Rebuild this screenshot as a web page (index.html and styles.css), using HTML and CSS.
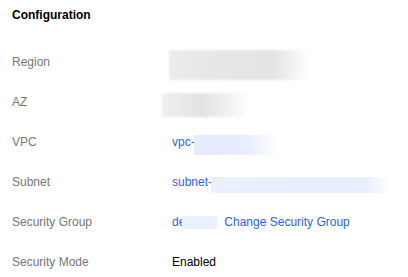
FILE: index.html
```html
<!DOCTYPE html>
<html>
<head>
<meta charset="utf-8">
<link rel="stylesheet" href="styles.css">
</head>
<body>
<div class="panel">
  <div class="title">Configuration</div>
  <div class="row">
    <div class="label">Region</div>
    <div class="value"><span class="blob blob-region"></span></div>
  </div>
  <div class="row">
    <div class="label">AZ</div>
    <div class="value"><span class="blob blob-az"></span></div>
  </div>
  <div class="row">
    <div class="label">VPC</div>
    <div class="value"><a class="link">vpc-</a><span class="blob blob-vpc"></span></div>
  </div>
  <div class="row">
    <div class="label">Subnet</div>
    <div class="value"><a class="link">subnet-</a><span class="blob blob-subnet"></span></div>
  </div>
  <div class="row">
    <div class="label">Security Group</div>
    <div class="value"><a class="link">de</a><span class="blob blob-sg"></span><a class="link change">Change Security Group</a></div>
  </div>
  <div class="row">
    <div class="label">Security Mode</div>
    <div class="value dark">Enabled</div>
  </div>
</div>
</body>
</html>
```
FILE: styles.css
```css
html, body {
  margin: 0;
  padding: 0;
  background: #fff;
}
body {
  font-family: "Liberation Sans", Arial, sans-serif;
  font-size: 12px;
  line-height: 14px;
  color: #252b3a;
  overflow: hidden;
}
.panel {
  padding: 8px 0 0 12px;
}
.title {
  font-weight: bold;
  color: #000;
  margin-bottom: 20px;
}
.row {
  display: flex;
  align-items: center;
  height: 40px;
}
.label {
  width: 160px;
  flex: none;
  color: #777;
}
.value {
  display: flex;
  align-items: center;
  white-space: nowrap;
}
.dark {
  color: #000;
}
.link {
  color: #2f62ea;
}
.change {
  margin-left: 7px;
}
.blob {
  display: inline-block;
  flex: none;
  margin-top: 6px;
}
.blob-region {
  width: 140px;
  height: 30px;
  margin-left: -3px;
  background: linear-gradient(to right, #ececec 0%, #e6e6e6 40%, #e4e4e4 75%, rgba(255,255,255,0) 100%);
  filter: blur(1px);
}
.blob-az {
  width: 88px;
  height: 24px;
  margin-left: -10px;
  background: linear-gradient(to right, #f0f0f0 0%, #e2e2e2 45%, rgba(255,255,255,0) 100%);
  filter: blur(1px);
}
.blob-vpc {
  width: 86px;
  height: 20px;
  margin-left: -1px;
  background: linear-gradient(to right, #e6ecfe 0%, #e8eefe 60%, rgba(255,255,255,0) 100%);
}
.blob-subnet {
  width: 181px;
  height: 16px;
  margin-left: -1px;
  background: linear-gradient(to right, #eaf0ff 0%, #e9eeff 85%, rgba(255,255,255,0) 100%);
}
.blob-sg {
  width: 35px;
  height: 13px;
  margin-left: -3px;
  margin-top: 1px;
  background: #eaf0fe;
}
```
